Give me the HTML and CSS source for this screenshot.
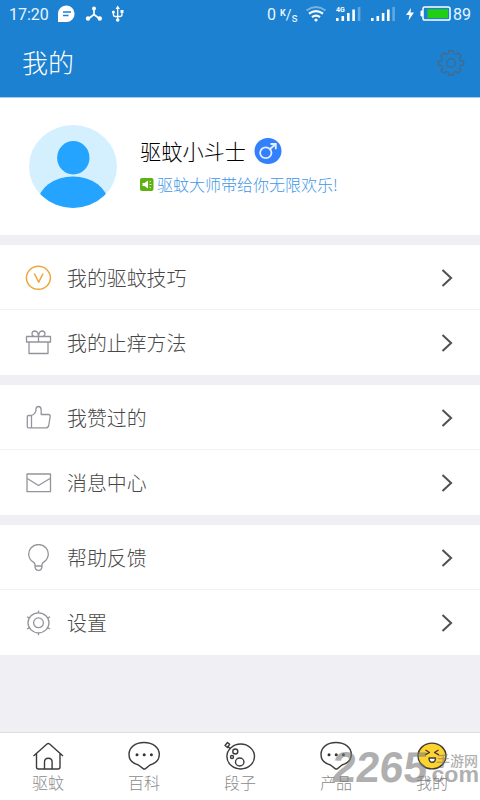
FILE: index.html
```html
<!DOCTYPE html>
<html lang="zh-CN">
<head>
<meta charset="utf-8">
<title>我的</title>
<link rel="stylesheet" href="styles.css">
</head>
<body>
<div class="app">
  <header class="top">
    <div class="status">
      <span class="clock">17:20</span>
      <svg class="notices" width="70" height="20" viewBox="57 4 70 20">
        <path d="M58 22V14a8.300 8.300 0 1 1 8.500 8z" fill="#fff"/>
        <path d="M63 12h8M63 15.500h5.500" stroke="#1c81d1" stroke-width="1.400"/>
        <path d="M94 8v6.500M94 14.500l-6 4.500M94 14.500l6 4.500" stroke="#fff" stroke-width="1.700" fill="none"/>
        <g fill="#fff"><circle cx="94" cy="8.500" r="2"/><circle cx="88" cy="18.500" r="2.200"/><circle cx="99.800" cy="18.500" r="2.200"/></g>
        <path d="M117.700 8v13M113.400 12v2.500q0 2 2 2h4.600q2 0 2-2V11" stroke="#fff" stroke-width="1.300" fill="none"/>
        <path d="M115.500 9l2.200-3.500L120 9z" fill="#fff"/><g fill="#fff"><circle cx="113.400" cy="12" r="1.500"/><circle cx="117.700" cy="20" r="1.800"/><path d="M120.500 10h3v3h-3z"/></g>
      </svg>
      <span class="speed">0</span><span class="unit"><sup>K</sup>/<sub>s</sub></span>
      <svg class="signals" width="150" height="20" viewBox="304 4 150 20">
        <g fill="none" stroke-width="2.100"><path d="M306.500 10.500q9.500-7 19 0" stroke="#75b5e6"/><path d="M309 13.700q7-5.200 14 0M312 17.200q4-3 8 0" stroke="#fff"/></g>
        <circle cx="316" cy="20" r="1.600" fill="#fff"/>
        <path d="M336 18h2.600v3H336zM341.500 16h2.600v5h-2.600zM347 13h2.600v8H347zM352.300 9.500h2.600V21h-2.600zM371 18h2.600v3H371zM376.500 16h2.600v5h-2.600zM381.800 13h2.600v8h-2.600zM387 9.500h2.600V21H387z" fill="#fff"/>
        <path d="M357.800 7h2.600v14h-2.600zM392.300 7h2.600v14h-2.600z" fill="#61a8df"/>
        <text x="336" y="12" class="gen">4G</text>
        <path d="M411 8l-5 7h3.500l-1 5.500 5.500-8h-3.500z" fill="#fff"/>
        <rect x="423" y="7" width="27" height="13" rx="1.800" fill="none" stroke="#fff" stroke-width="1.500"/>
        <path d="M421 11h1.500v5H421z" fill="#fff" stroke="#fff"/><path d="M427.500 9.200h20.500v8.800h-20.500z" fill="#20cf13"/>
      </svg>
      <span class="charge">89</span>
    </div>
    <div class="titlebar">
      <h1>我的</h1>
      <svg width="28" height="28" viewBox="-14 -14 28 28" fill="none" stroke="#416c91" stroke-width="1.500" stroke-linejoin="round">
        <circle r="4.300"/>
        <path d="M-2.300-12.200H2.300V-9.600L5-8.400L7-10.200L10.200-7L8.400-5L9.600-2.300H12.700V2.300H9.600L8.400 5L10.200 7L7 10.200L5 8.400L2.300 9.600V12.200H-2.300V9.600L-5 8.400L-7 10.200L-10.200 7L-8.400 5L-9.600 2.300H-12.700V-2.300H-9.600L-8.400-5L-10.200-7L-7-10.200L-5-8.400L-2.300-9.600Z"/>
      </svg>
    </div>
  </header>

  <section class="profile">
    <svg class="avatar" width="88" height="83" viewBox="0 0 88 83">
      <defs><clipPath id="face"><ellipse cx="44" cy="41.500" rx="44" ry="41.500"/></clipPath></defs>
      <g clip-path="url(#face)"><path d="M0 0h88v83H0z" fill="#d4f0ff"/><ellipse cx="44.300" cy="32.800" rx="16.200" ry="16.700" fill="#24a4ff"/><ellipse cx="44" cy="78" rx="35" ry="26.500" fill="#24a4ff"/></g>
    </svg>
    <div class="who">
      <div class="name"><span>驱蚊小斗士</span>
        <svg width="28" height="26" viewBox="0 0 28 26"><ellipse cx="14" cy="13" rx="13.500" ry="13" fill="#3280fc"/><g fill="none" stroke="#e4efff" stroke-width="1.800"><ellipse cx="11.800" cy="14.800" rx="5.700" ry="5.400"/><path d="M16 11l5.500-4.700M16.500 6h5.300v5.300"/></g></svg>
      </div>
      <div class="slogan">
        <svg width="14" height="13" viewBox="0 0 14 13"><rect width="13.500" height="13" rx="2" fill="#5eb112"/><path d="M2.500 5h2L8 2.500v8L4.500 8h-2z" fill="#fff"/><path d="M9.500 4l1.500-1M9.500 6.500h2M9.500 9l1.500 1" stroke="#d8f0c4"/></svg>
        <span>驱蚊大师带给你无限欢乐!</span>
      </div>
    </div>
  </section>

  <ul class="menu">
    <li><svg class="icon gold" viewBox="0 0 28 28"><ellipse cx="14.400" cy="13.800" rx="12" ry="11.500"/><path d="M10.300 9.500l4.400 8.700 4.400-8.700"/></svg><span>我的驱蚊技巧</span><svg class="arrow" viewBox="0 0 14 20"><path d="M2.500 2l8.600 8-8.600 8"/></svg></li>
    <li><svg class="icon" viewBox="0 0 28 28"><path d="M2.500 7.500h24v5.500h-24zM5 13v11.500h19V13M14.500 7.500V13M14.500 7.500H11.500q-3.500 0-3.500-2.700t3-2.800q3 0 3.500 5.500zM14.500 7.500H17.500q3.500 0 3.500-2.700t-3-2.800q-3 0-3.500 5.500z"/></svg><span>我的止痒方法</span><svg class="arrow" viewBox="0 0 14 20"><path d="M2.500 2l8.600 8-8.600 8"/></svg></li>
  </ul>
  <ul class="menu">
    <li><svg class="icon" viewBox="0 0 28 28"><path d="M4.500 11.500h3v12.300h-3q-1.200 0-1.200-1.200v-9.900q0-1.200 1.200-1.200zM7.500 11.500q4-1.500 4.500-5.500V4.500q.5-2 2.500-2 2.500 0 2.700 3.500v4.500h7q2.200 0 2 2l-1.500 9q-.5 2.300-2.500 2.300H7.500"/></svg><span>我赞过的</span><svg class="arrow" viewBox="0 0 14 20"><path d="M2.500 2l8.600 8-8.600 8"/></svg></li>
    <li><svg class="icon" viewBox="0 0 28 28"><path d="M3 5h23.500v17.700H3zM3.300 9.500l11.200 7 11.500-7"/></svg><span>消息中心</span><svg class="arrow" viewBox="0 0 14 20"><path d="M2.500 2l8.600 8-8.600 8"/></svg></li>
  </ul>
  <ul class="menu">
    <li><svg class="icon" viewBox="0 0 28 28"><path d="M11 22v-1.500q0-1.500-2-2.600a9.800 9.500 0 1 1 11 0q-2 1.100-2 2.600V22zM11 22q0 4.300 3.500 4.300T18 22"/></svg><span>帮助反馈</span><svg class="arrow" viewBox="0 0 14 20"><path d="M2.500 2l8.600 8-8.600 8"/></svg></li>
    <li><svg class="icon" viewBox="0 0 28 28"><ellipse cx="14.500" cy="13.800" rx="10.500" ry="10"/><circle cx="14.500" cy="13.800" r="4.900"/><path d="M14.500 1.500v2.300M14.500 23.800v2.500M3 7.700l2.400 1.400M26 7.700l-2.400 1.400M3 20l2.400-1.400M26 20l-2.400-1.400"/></svg><span>设置</span><svg class="arrow" viewBox="0 0 14 20"><path d="M2.500 2l8.600 8-8.600 8"/></svg></li>
  </ul>

  <nav class="tabs">
    <a><svg viewBox="0 0 32 30"><path d="M1.500 15L15 3q1.300-1 2.600 0L31 15M4.500 12.500V26q0 2 2 2H26q2 0 2-2V12.500M12.500 28v-7q0-3.800 3.800-3.800t3.800 3.800v7"/></svg><span>驱蚊</span></a>
    <a><svg viewBox="0 0 32 30"><path d="M16 1.500c9 0 15.300 5 15.300 12 0 5.500-4 9-9.300 10.500l-4.500 3.600q-1.200 1-2.400 0L10.500 24C4.500 22.500 1 19 1 13.500c0-7 6-12 15-12z"/><g class="dots"><circle cx="9" cy="13.800" r="1.500"/><circle cx="16.200" cy="13.800" r="1.500"/><circle cx="23.400" cy="13.800" r="1.500"/></g></svg><span>百科</span></a>
    <a><svg viewBox="0 0 32 30"><ellipse cx="16.700" cy="15.500" rx="13.800" ry="12.500"/><ellipse cx="15.700" cy="21" rx="4.200" ry="4"/><circle cx="11.300" cy="10.500" r="2.500"/><circle cx="8" cy="16" r="1.500"/><path d="M6.500 8L3.500 5M1 4.500l2.500 2 2.200-3.300L3.500 1.500z"/></svg><span>段子</span></a>
    <a><svg viewBox="0 0 32 30"><path d="M16 1.500c9 0 15.300 5 15.300 12 0 5.500-4 9-9.300 10.500l-4.500 3.600q-1.200 1-2.400 0L10.500 24C4.500 22.500 1 19 1 13.500c0-7 6-12 15-12z"/><g class="dots"><circle cx="9" cy="13.800" r="1.500"/><circle cx="16.200" cy="13.800" r="1.500"/><circle cx="23.400" cy="13.800" r="1.500"/></g></svg><span>产品</span></a>
    <a class="current"><svg viewBox="0 0 32 30"><ellipse cx="16" cy="15" rx="14" ry="12.900" fill="#fed330"/><path d="M9.500 9l4 2.500-4.500 2.300M22.500 9l-4 2.500 4.500 2.300"/><path d="M13 17h6.500q0 4.300-3.200 4.300T13 17z" fill="#fff"/></svg><span>我的</span></a>
  </nav>
  <svg class="watermark" width="152" height="54" viewBox="328 741 152 54">
    <text class="digits" transform="translate(331 782) skewX(-6)" textLength="95" lengthAdjust="spacingAndGlyphs">2265</text>
    <text class="site" x="436" y="766" textLength="42">手游网</text>
    <text class="domain" x="425" y="782" textLength="54" lengthAdjust="spacingAndGlyphs">.com</text>
  </svg>
</div>
</body>
</html>
```

FILE: styles.css
```css
* { box-sizing: border-box; }
body {
  margin: 0;
  font-family: "Noto Sans CJK SC", sans-serif;
  font-weight: 300;
  background: #efeff4;
}
svg { display: block; flex: none; }
.app {
  position: relative;
  width: 480px;
  height: 800px;
  overflow: hidden;
  display: flex;
  flex-direction: column;
}
.top {
  height: 98px;
  background: #1c81d1;
  color: #fff;
  border-bottom: 1px solid #a4cdec;
}
.status {
  height: 28px;
  display: flex;
  align-items: center;
  font: 400 16px/28px Roboto, sans-serif;
  padding-left: 9px;
  color: #e8f5ff;
}
.status span { padding-top: 1px; }
.clock { width: 48px; }
.speed { margin-left: 140px; width: 13px; }
.unit { width: 24px; font-size: 14px; line-height: 14px; white-space: nowrap; }
.unit sup, .unit sub { line-height: 0; }
.unit sup { font-size: 9px; font-weight: 700; vertical-align: 4px; }
.unit sub { font-size: 12px; vertical-align: -2px; }
.gen { font: 700 7px Roboto, sans-serif; fill: #fff; }
.charge { margin-left: -1px; }
.titlebar {
  height: 69px;
  display: flex;
  align-items: center;
  justify-content: space-between;
  padding: 0 15px 0 22px;
}
h1 { margin: -2px 0 0; font-size: 26px; font-weight: 300; line-height: 40px; }
.profile {
  height: 137px;
  background: #fff;
  display: flex;
  padding: 27px 0 0 29px;
}
.who { padding: 9px 0 0 23px; }
.name {
  display: flex;
  align-items: center;
  gap: 8px;
  height: 34px;
  color: #000;
  font-size: 21.2px;
}
.name span { margin-top: -2px; }
.slogan {
  display: flex;
  align-items: center;
  gap: 3px;
  height: 32px;
  color: #3f97e7;
  font-size: 16px;
  white-space: nowrap;
}
.menu {
  margin: 10px 0 0;
  padding: 0;
  list-style: none;
  background: #fff;
}
.menu li {
  height: 65px;
  display: flex;
  align-items: center;
  padding: 0 26px 0 24px;
  color: #484848;
  font-size: 19.9px;
}
.menu li:first-child { box-shadow: inset 0 -1px #f2f2f4; }
.menu span { flex: 1; margin: -1px 0 0 15px; }
.icon {
  width: 28px;
  height: 28px;
  fill: none;
  stroke: #94949a;
  stroke-width: 1.3;
  stroke-linejoin: round;
}
.gold { stroke: #eca63a; stroke-width: 1.5; }
.arrow { width: 14px; height: 20px; fill: none; stroke: #505050; stroke-width: 2; }
.tabs {
  margin-top: auto;
  height: 68px;
  background: #fff;
  border-top: 1px solid #dedee2;
  display: flex;
}
.tabs a {
  flex: 1;
  padding-top: 8px;
  display: flex;
  flex-direction: column;
  align-items: center;
  color: #8a8a8a;
  font-size: 16px;
  line-height: 24px;
}
.tabs span { margin-top: -1px; }
.tabs svg { width: 32px; height: 30px; fill: none; stroke: #3c3c3c; stroke-width: 1.4; stroke-linejoin: round; }
.tabs .dots { fill: #333; stroke: none; }
.watermark {
  position: absolute;
  right: 0;
  top: 741px;
  fill: #777;
  opacity: .58;
  overflow: visible;
}
.digits { font: 700 43px "Liberation Sans", sans-serif; }
.site { font-size: 14px; font-weight: 500; }
.domain { font: 700 22px "Liberation Sans", sans-serif; }
```
